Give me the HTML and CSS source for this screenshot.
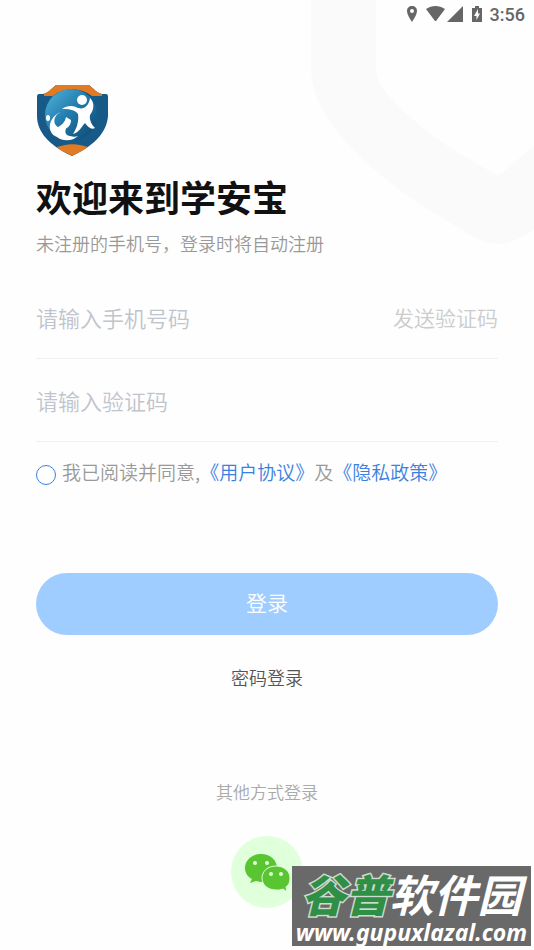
FILE: index.html
```
<!DOCTYPE html>
<html lang="zh-CN">
<head>
    <meta charset="UTF-8">
    <meta name="viewport" content="width=device-width, initial-scale=1">
    <title>学安宝 - 登录</title>
    <link rel="stylesheet" href="styles.css">
</head>
<body>
    <svg class="bg-shield" viewBox="0 0 224 246" aria-hidden="true">
        <path d="M1 0V66C1 88 8 106 23 126C47 159 83 187 124 213L157 233C169 240 176 243 187 244C198 244 207 240 217 234L224 230V146L188 176L149 153C115 132 84 106 70 83C67 78 66 73 66 66V0Z"/>
    </svg>

    <div class="status-bar">
        <svg class="pin" viewBox="0 0 12 16" aria-hidden="true"><path fill-rule="evenodd" d="M6 0C3 0 1 2 1 5C1 9 6 16 6 16S11 9 11 5C11 2 9 0 6 0ZM6 3A2 2 0 1 1 6 7A2 2 0 0 1 6 3Z"/></svg>
        <svg class="signal" viewBox="0 0 38 16" aria-hidden="true"><path d="M0 3C6-1 13-1 19 3L10 15H9ZM37 0V16H21Z"/></svg>
        <svg class="battery" viewBox="0 0 10 16" aria-hidden="true"><path fill-rule="evenodd" d="M3 0H7V2H10V16H0V2H3ZM6 3L2 10H4.500V14L8 7.500H6Z"/></svg>
        <span>3:56</span>
    </div>

    <main class="login">
        <svg class="logo" viewBox="0 0 72 72" role="img" aria-label="学安宝">
            <defs>
                <linearGradient id="ball" x1="0" y1="0" x2="1" y2="1">
                    <stop offset="0" stop-color="#55b4de"/>
                    <stop offset=".45" stop-color="#227eae"/>
                    <stop offset="1" stop-color="#0d426e"/>
                </linearGradient>
                <clipPath id="shield"><path d="M20 1H53C58 5 61 9 66 10H70Q72 10 72 13V32C71 47 60 61 36 72C12 61 1 47 1 32V13Q1 10 3 10H7C12 9 15 5 20 1Z"/></clipPath>
            </defs>
            <g clip-path="url(#shield)">
                <rect width="72" height="72" fill="#175a87"/>
                <path d="M8 0H66V12H56C45 3 27 3 17 12H8Z" fill="#e17a23"/>
                <path d="M20 64C30 59 43 59 53 64L36 72Z" fill="#e17a23"/>
            </g>
            <circle cx="35" cy="31" r="26" fill="url(#ball)"/>
            <g fill="#fff">
                <circle cx="46" cy="16" r="5"/>
                <path d="M26 25C30 22 35 21 40 23C47 27 53 22 54 14C59 19 58 26 54 31C53 36 56 41 59 44C55 46 52 43 49 39C46 42 43 49 37 50C41 44 43 37 42 30C38 25 32 25 26 25Z"/>
                <path d="M25 28C20 30 17 35 19 40C21 45 28 44 33 41C28 45 28 51 34 52C37 53 40 53 42 52C37 57 27 58 21 53C10 49 12 33 25 28Z"/>
                <path d="M25 46C31 45 35 42 35 36L30 33C29 38 26 41 22 43Z"/>
                <ellipse cx="12" cy="34" rx="2" ry="3"/>
            </g>
        </svg>

        <h1>欢迎来到学安宝</h1>
        <p class="subtitle">未注册的手机号，登录时将自动注册</p>

        <form>
            <div class="field">
                <input type="tel" placeholder="请输入手机号码" aria-label="手机号码">
                <button type="button" class="send-btn">发送验证码</button>
            </div>
            <div class="field">
                <input type="text" placeholder="请输入验证码" aria-label="验证码">
            </div>
            <div class="agreement">
                <input type="checkbox" id="agree">
                <div class="agree-text"><label for="agree">我已阅读并同意,</label><a href="#">《用户协议》</a>及<a href="#">《隐私政策》</a></div>
            </div>
            <button type="submit" class="login-btn">登录</button>
        </form>

        <a href="#" class="password-login">密码登录</a>

        <p class="other">其他方式登录</p>
        <button type="button" class="wechat" aria-label="微信登录">
            <svg viewBox="0 0 72 72" aria-hidden="true">
                <path fill="#58c531" d="M30 18C21 18 14 24 14 32C14 37 17 41 21 43L19 47L25 45C28 46 31 46 34 46C45 45 46 38 46 32C46 24 39 18 30 18Z"/>
                <path fill="#58c531" stroke="#e0ffdb" d="M45 30C37 30 31 35 31 42C31 49 37 54 45 54C47 54 50 54 52 53L56 56L55 51C58 49 59 46 59 42C59 35 53 30 45 30Z"/>
                <g fill="#e0ffdb"><circle cx="24" cy="27" r="2"/><circle cx="36" cy="27" r="2"/><circle cx="40" cy="38" r="2"/><circle cx="50" cy="38" r="2"/></g>
            </svg>
        </button>
    </main>

    <div class="watermark">
        <div class="site-name"><b>谷普</b>软件园</div>
        <div class="site-url">www.gupuxlazal.com</div>
    </div>
</body>
</html>
```
FILE: styles.css
```
* { box-sizing: border-box; }
body { margin: 0; position: relative; min-height: 100vh; background-color: #fefefe; color: #999; font-family: "Noto Sans CJK SC", sans-serif; font-weight: 350; }
h1, p { margin: 0; }
a { color: #3a80e0; text-decoration: none; }
button, input { font-family: inherit; font-weight: inherit; border: none; background: none; padding: 0; margin: 0; }
button { cursor: pointer; }

.bg-shield { position: absolute; top: 0; right: 0; width: 224px; height: 246px; fill: #fafafa; z-index: -1; }

.status-bar { display: flex; justify-content: flex-end; align-items: center; height: 28px; padding-right: 9px; color: #666; font: 500 18px Roboto, sans-serif; }
.status-bar svg { height: 16px; fill: #666; }
.pin { width: 12px; margin-right: 8px; }
.signal { width: 38px; margin-right: 8px; }
.battery { width: 10px; margin-right: 8px; }

.login { display: flex; flex-direction: column; padding: 56px 36px 40px; }
.logo { width: 72px; height: 72px; }
h1 { margin-top: 13px; font-size: 36px; line-height: 54px; color: #111; }
.subtitle { margin-top: 6px; font-size: 18px; line-height: 28px; }

form { margin-top: 19px; }
.field { display: flex; align-items: center; height: 83px; border-bottom: 1px solid #f0f0f0; }
.field input { flex: 1; min-width: 0; height: 40px; font-size: 22px; color: #333; outline: none; }
.field input::placeholder { color: #c0c4cc; opacity: 1; }
.send-btn { font-size: 21px; line-height: 32px; color: #ccc; }

.agreement { display: flex; align-items: center; gap: 6px; margin-top: 16px; font-size: 19px; line-height: 28px; }
.agreement input { appearance: none; flex: none; width: 20px; height: 20px; margin-top: 6px; border: 1px solid #3a80e0; border-radius: 50%; }
.agreement input:checked { background-color: #3a80e0; }

.login-btn { display: block; width: 100%; height: 62px; margin-top: 87px; padding-bottom: 4px; border-radius: 31px; background-color: #a0cdff; color: #fff; font-size: 21px; }
.password-login { align-self: center; margin-top: 28px; font-size: 18px; line-height: 28px; color: #555; }
.other { margin-top: 87px; text-align: center; font-size: 17px; line-height: 28px; color: #aaa; }
.wechat { align-self: center; width: 72px; height: 72px; margin-top: 30px; border-radius: 50%; background-color: #e0ffdb; }
.wechat svg { display: block; width: 72px; height: 72px; }

.watermark { position: absolute; right: 3px; bottom: 4px; width: 239px; height: 80px; background-color: #696969; color: #fff; white-space: nowrap; text-align: center; }
.site-name { font-size: 44px; font-weight: 700; font-style: italic; line-height: 54px; }
.site-name b { color: #2f8f46; -webkit-text-stroke: 3px #ccdccd; paint-order: stroke fill; }
.site-url { font: italic 700 23px/24px "Noto Sans", sans-serif; }
```
